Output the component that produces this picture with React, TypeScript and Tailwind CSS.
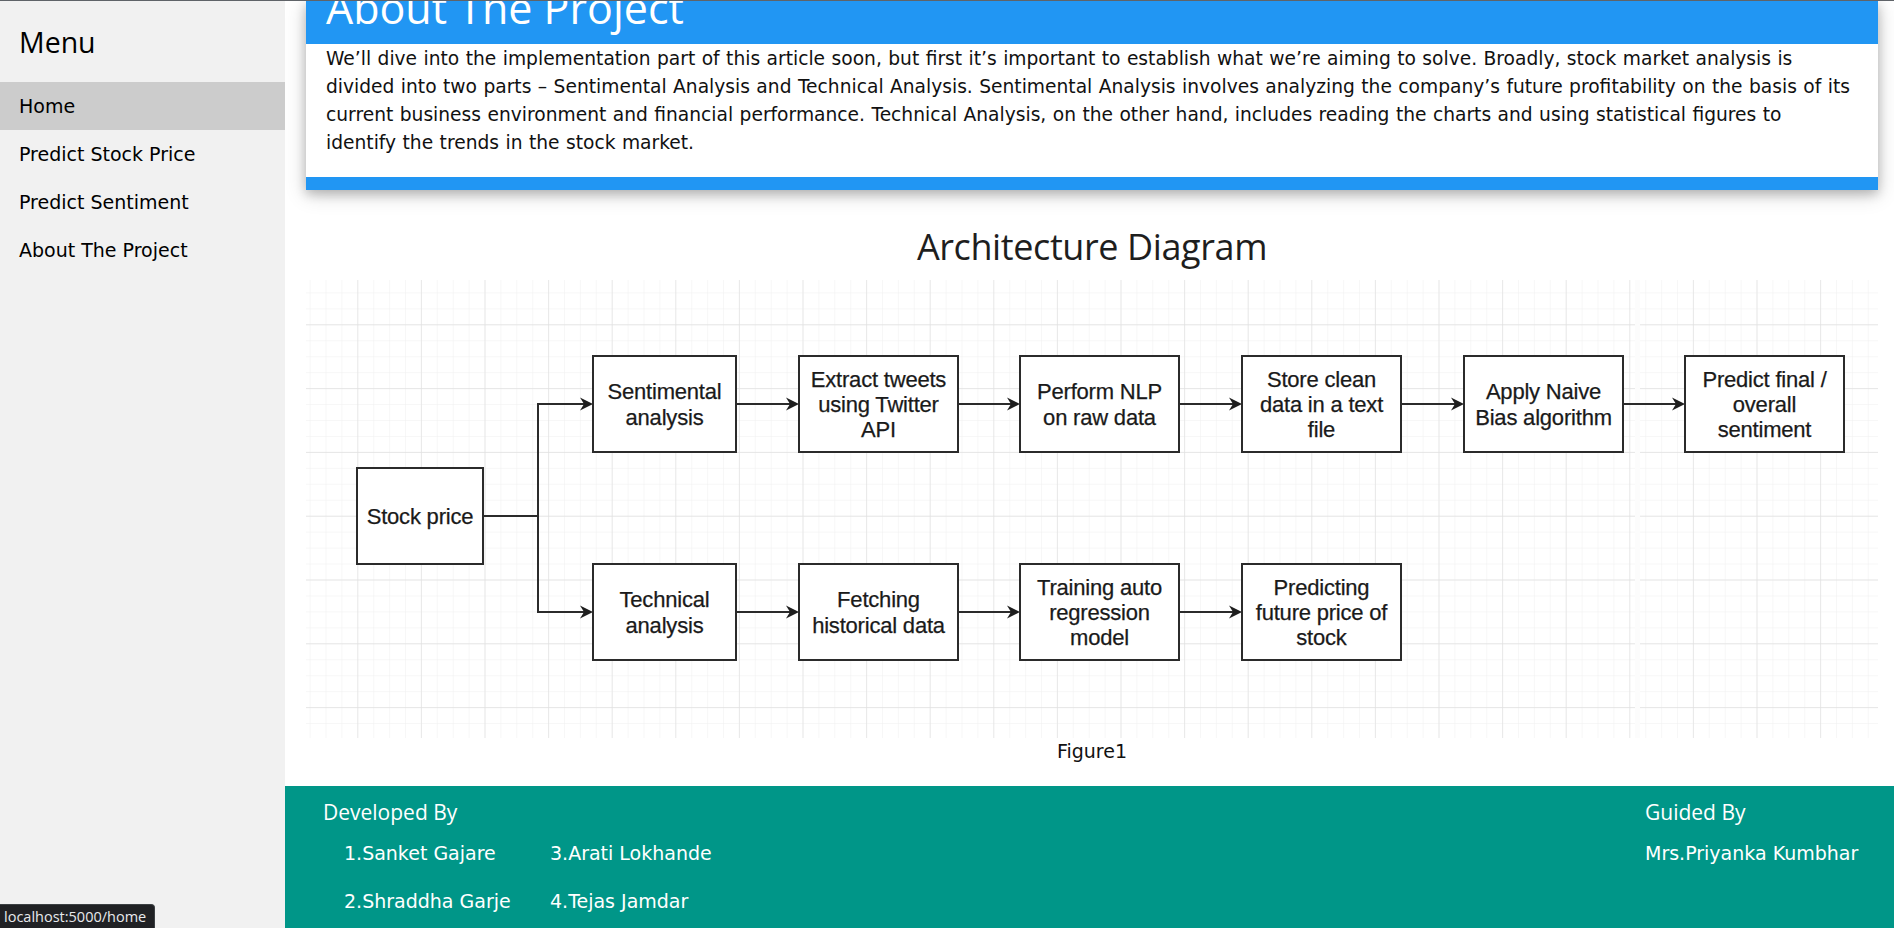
import React from "react";

const menuItems = ["Home", "Predict Stock Price", "Predict Sentiment", "About The Project"];

const boxes = [
  { x: 51, y: 188, w: 126, lines: ["Stock price"] },
  { x: 287, y: 76, w: 143, lines: ["Sentimental", "analysis"] },
  { x: 493, y: 76, w: 159, lines: ["Extract tweets", "using Twitter", "API"] },
  { x: 714, y: 76, w: 159, lines: ["Perform NLP", "on raw data"] },
  { x: 936, y: 76, w: 159, lines: ["Store clean", "data in a text", "file"] },
  { x: 1158, y: 76, w: 159, lines: ["Apply Naive", "Bias algorithm"] },
  { x: 1379, y: 76, w: 159, lines: ["Predict final /", "overall", "sentiment"] },
  { x: 287, y: 284, w: 143, lines: ["Technical", "analysis"] },
  { x: 493, y: 284, w: 159, lines: ["Fetching", "historical data"] },
  { x: 714, y: 284, w: 159, lines: ["Training auto", "regression", "model"] },
  { x: 936, y: 284, w: 159, lines: ["Predicting", "future price of", "stock"] },
];

// [fromX, toX, y]
const arrows = [
  [232, 287, 124],
  [232, 287, 332],
  [430, 493, 124],
  [652, 714, 124],
  [873, 936, 124],
  [1095, 1158, 124],
  [1317, 1379, 124],
  [430, 493, 332],
  [652, 714, 332],
  [873, 936, 332],
];

const Diagram = () => (
  <svg viewBox="0 0 1572 458" width="1572" height="458" className="block">
    <defs>
      <pattern id="minor" width="15.9" height="15.95" x="51.3" y="44.3" patternUnits="userSpaceOnUse">
        <path d="M 15.9 0 L 0 0 0 15.95" fill="none" stroke="#f0f0f0" strokeWidth="1" />
      </pattern>
      <pattern id="major" width="63.6" height="63.8" x="51.3" y="44.3" patternUnits="userSpaceOnUse">
        <path d="M 63.6 0 L 0 0 0 63.8" fill="none" stroke="#e1e1e1" strokeWidth="1.3" />
      </pattern>
    </defs>
    <rect width="1572" height="458" fill="#fff" />
    <rect width="1572" height="458" fill="url(#minor)" />
    <rect width="1572" height="458" fill="url(#major)" />
    <rect x="1329" y="0" width="5" height="458" fill="#fcfcfc" />

    <g stroke="#2b2b2b" strokeWidth="2" fill="none">
      <path d="M 177 236 L 232 236" />
      <path d="M 232 123 L 232 333" />
      {arrows.map(([a, b, y], i) => (
        <path key={i} d={`M ${a} ${y} L ${b - 8} ${y}`} />
      ))}
    </g>
    <g fill="#1e1e1e">
      {arrows.map(([, b, y], i) => (
        <path key={i} d={`M ${b} ${y} L ${b - 13} ${y - 6.5} L ${b - 9} ${y} L ${b - 13} ${y + 6.5} Z`} />
      ))}
    </g>

    {boxes.map((bx, i) => {
      const cy = bx.y + 48;
      const first = cy + 7.9 - ((bx.lines.length - 1) * 25.3) / 2;
      return (
        <g key={i}>
          <rect x={bx.x} y={bx.y} width={bx.w} height={96} fill="#fff" stroke="#2b2b2b" strokeWidth="2" />
          <text
            x={bx.x + bx.w / 2}
            y={first}
            textAnchor="middle"
            fontSize="22"
            fill="#1a1a1a"
            stroke="#1a1a1a"
            strokeWidth="0.25"
            fontFamily="'Liberation Sans', Arial, sans-serif"
            letterSpacing="-0.2"
          >
            {bx.lines.map((l, j) => (
              <tspan key={j} x={bx.x + bx.w / 2} dy={j === 0 ? 0 : 25.3}>
                {l}
              </tspan>
            ))}
          </text>
        </g>
      );
    })}
  </svg>
);

export default function App() {
  return (
    <div className="relative flex h-[928px] overflow-hidden border-t border-[#5f6368] bg-white font-['DejaVu_Sans',Verdana,sans-serif] text-[19px] text-[#111]">
      <aside className="w-[285px] shrink-0 bg-[#f1f1f1]">
        <h3 className="pl-[19px] pt-[24px] font-['Open_Sans',sans-serif] text-[28.5px] leading-[34px] text-black">
          Menu
        </h3>
        <nav className="mt-[23px]">
          {menuItems.map((item, key) => (
            <a
              key={key}
              className={`block py-[10px] pl-[19px] leading-[28px] text-black ${key === 0 ? "bg-[#cccccc]" : ""}`}
            >
              {item}
            </a>
          ))}
        </nav>
      </aside>

      <main className="flex min-w-0 flex-1 flex-col">
        <div className="pl-[21px] pr-[16px]">
          <div className="bg-white shadow-[0_4px_10px_0_rgba(0,0,0,0.2),0_4px_20px_0_rgba(0,0,0,0.19)]">
            <div className="h-[43px] overflow-hidden bg-[#2196f3] px-[20px]">
              <h1 className="-mt-[15px] font-['Open_Sans',sans-serif] text-[43px] leading-[43px] text-white">
                About The Project
              </h1>
            </div>
            <p className="pb-[20px] pl-[20px] pr-[6px] pt-[1px] text-[18.67px] leading-[28px] [word-spacing:0.5px]">
              We’ll dive into the implementation part of this article soon, but first it’s important to establish
              what we’re aiming to solve. Broadly, stock market analysis is
              <br />
              divided into two parts – Sentimental Analysis and Technical Analysis. Sentimental Analysis involves
              analyzing the company’s future profitability on the basis of its
              <br />
              current business environment and financial performance. Technical Analysis, on the other hand, includes
              reading the charts and using statistical figures to
              <br />
              identify the trends in the stock market.
            </p>
            <div className="h-[13px] bg-[#2196f3]" />
          </div>

          <h2 className="mt-[35px] text-center font-['Open_Sans',sans-serif] text-[36px] leading-[44px] tracking-[-0.4px] text-[#1e1e1e]">
            Architecture Diagram
          </h2>
          <div className="mt-[11px] h-[458px] overflow-hidden">
            <Diagram />
          </div>
          <p className="text-center leading-[27px]">Figure1</p>
        </div>

        <footer className="mt-[21px] flex flex-1 bg-[#009688] pl-[38px] pt-[12px] text-white">
          <div className="flex-1">
            <h4 className="font-['Open_Sans',sans-serif] text-[21px] leading-[28px]">Developed By</h4>
            <div className="mt-[13px] grid grid-cols-[206px_auto] gap-y-[20px] pl-[21px] leading-[28px]">
              <span>1.Sanket Gajare</span>
              <span>3.Arati Lokhande</span>
              <span>2.Shraddha Garje</span>
              <span>4.Tejas Jamdar</span>
            </div>
          </div>
          <div className="w-[249px] shrink-0">
            <h4 className="font-['Open_Sans',sans-serif] text-[21px] leading-[28px]">Guided By</h4>
            <p className="mt-[13px] leading-[28px]">Mrs.Priyanka Kumbhar</p>
          </div>
        </footer>
      </main>

      <div className="absolute bottom-0 left-0 h-[24px] w-[155px] rounded-tr-[4px] border-r border-t border-[#3c4043] bg-[#202124] pl-[4px] font-['Open_Sans',sans-serif] text-[14.5px] leading-[23px] text-[#e8eaed]">
        localhost:5000/home
      </div>
    </div>
  );
}
